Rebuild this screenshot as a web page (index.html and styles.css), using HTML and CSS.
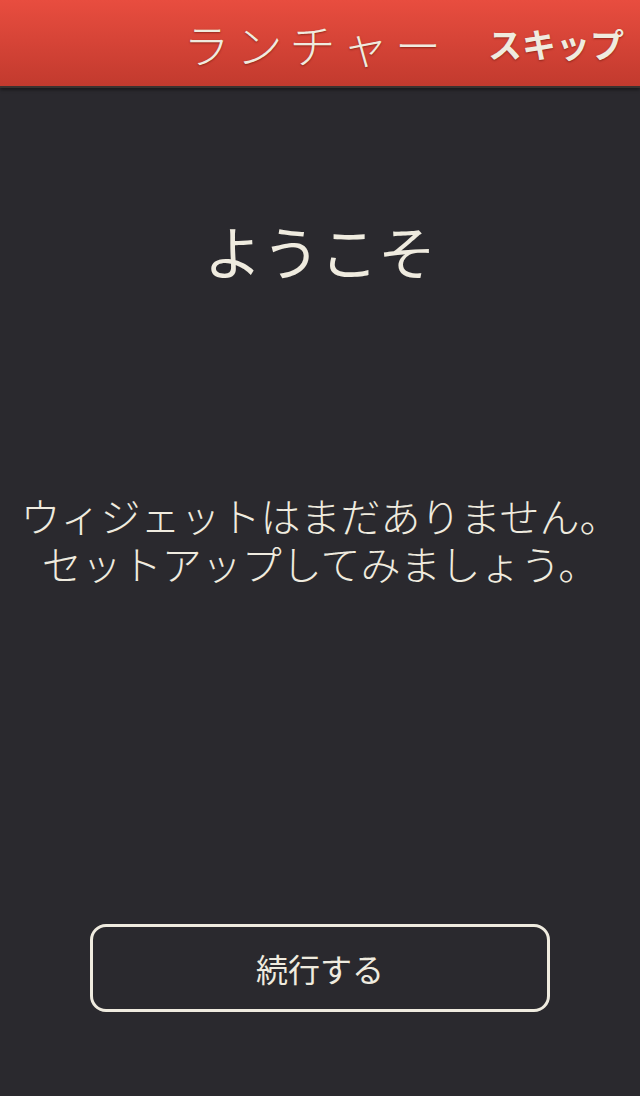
FILE: index.html
```html
<!DOCTYPE html>
<html lang="ja">
  <head>
    <meta charset="UTF-8" />
    <meta name="viewport" content="width=device-width, initial-scale=1.0" />
    <title>ランチャー</title>
    <link rel="stylesheet" href="styles.css">
  </head>
  <body>
    <header class="topbar">
      <h1 class="title">ランチャー</h1>
      <span class="skip">スキップ</span>
    </header>

    <main class="welcome">
      <h2 class="greeting">ようこそ</h2>
      <p class="message">
        <span class="line">ウィジェットはまだありません。</span>
        <span class="line">セットアップしてみましょう。</span>
      </p>
      <button class="continue">続行する</button>
    </main>
  </body>
</html>
```

FILE: styles.css
```css
body {
  font-family: "Noto Sans CJK JP", "Noto Sans", sans-serif;
  background-color: #2a292e;
  color: #efebdf;
  margin: 0;
  height: 1096px;
  overflow: hidden;
}

.topbar {
  display: flex;
  justify-content: flex-end;
  align-items: center;
  height: 86px;
  padding-right: 16px;
  background: linear-gradient(#e84d3f, #c23a2e);
  border-bottom: 2px solid #3a3230;
  box-shadow: 0 2px 3px rgba(0, 0, 0, 0.4);
}

.title {
  margin: 0 40px 0 0;
  font-size: 46px;
  font-weight: 300;
  letter-spacing: 7px;
  text-shadow: 0 1px 2px rgba(80, 10, 0, 0.5);
}

.skip {
  font-size: 34px;
  font-weight: 700;
  text-shadow: 0 1px 2px rgba(80, 10, 0, 0.5);
}

.welcome {
  display: flex;
  flex-direction: column;
  align-items: center;
}

.greeting {
  margin: 133px 0 0;
  font-size: 58px;
  font-weight: 400;
  line-height: 58px;
}

.message {
  display: flex;
  flex-direction: column;
  align-items: center;
  margin: 212px 0 0;
  font-size: 40px;
  font-weight: 300;
}

.line {
  display: block;
  height: 48px;
  line-height: 48px;
}

.continue {
  margin-top: 337px;
  width: 460px;
  height: 88px;
  background: transparent;
  color: #efebdf;
  border: 3px solid #efebdf;
  border-radius: 16px;
  font-family: inherit;
  font-size: 32px;
}
```
